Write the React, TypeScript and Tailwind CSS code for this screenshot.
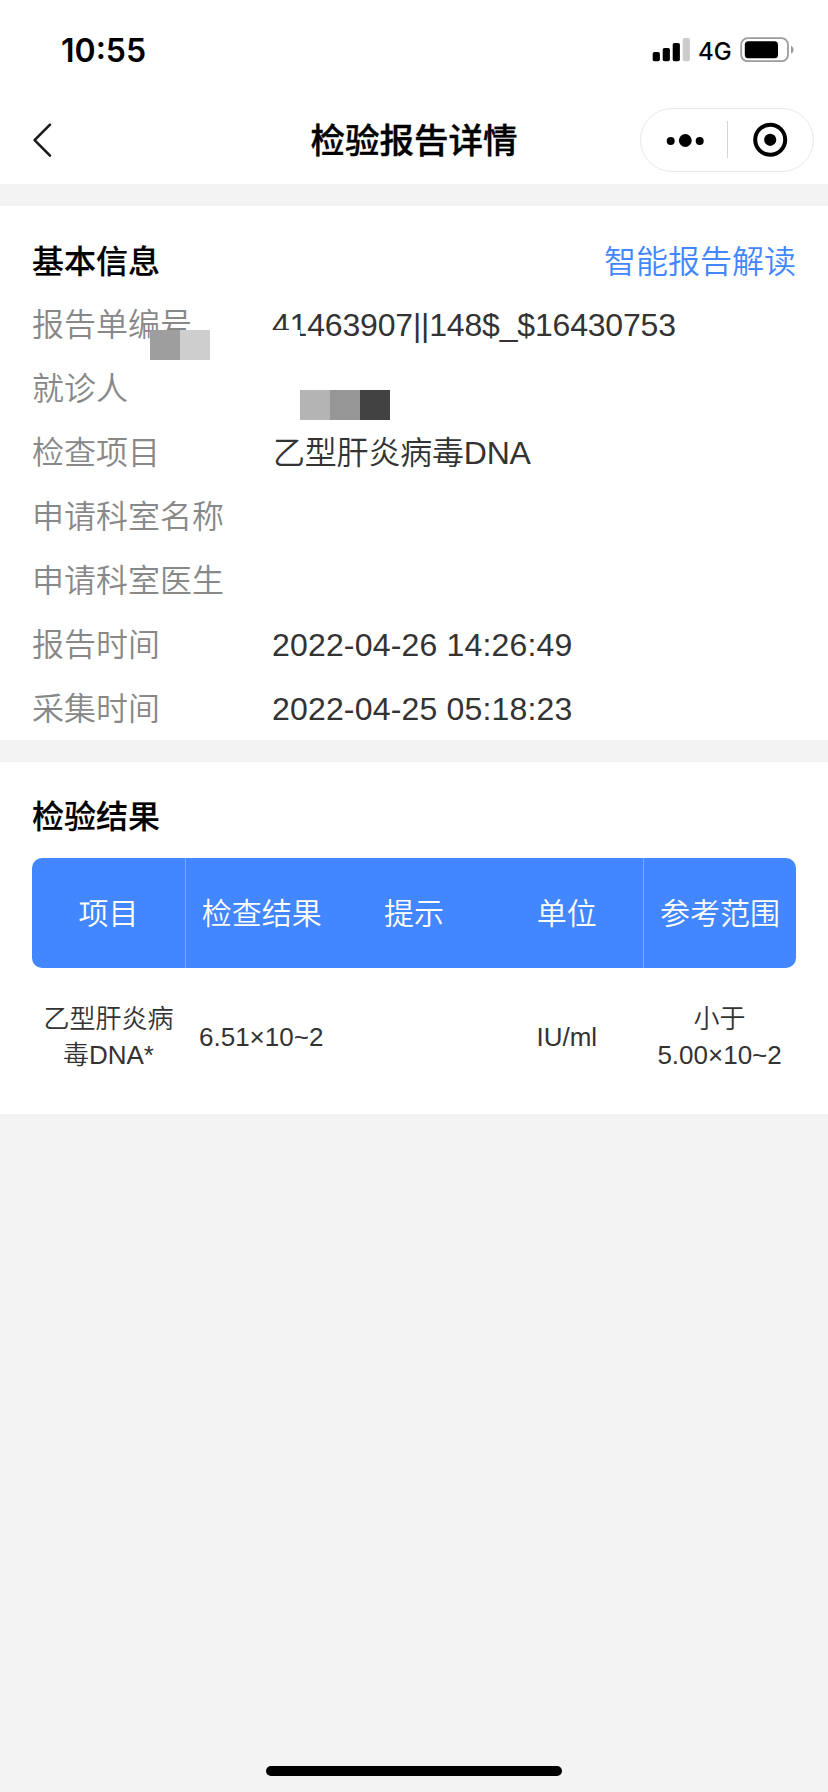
import React from 'react';

const infoRows = [
  { label: '报告单编号', value: '41463907||148$_$16430753', spacing: 'tracking-[-0.18px]' },
  { label: '就诊人', value: '', spacing: '' },
  { label: '检查项目', value: '乙型肝炎病毒DNA', spacing: 'pl-px tracking-[-0.2px]' },
  { label: '申请科室名称', value: '', spacing: '' },
  { label: '申请科室医生', value: '', spacing: '' },
  { label: '报告时间', value: '2022-04-26 14:26:49', spacing: 'tracking-[0.17px]' },
  { label: '采集时间', value: '2022-04-25 05:18:23', spacing: 'tracking-[0.17px]' },
];

const columns = ['项目', '检查结果', '提示', '单位', '参考范围'];

const results = [['乙型肝炎病毒DNA*', '6.51×10~2', '', 'IU/ml', '小于 5.00×10~2']];

const StatusBar: React.FC = () => (
  <div className="flex h-24 items-start justify-between pl-[61px] pr-[33px] font-['Inter',sans-serif] text-black">
    <span className="pt-[31px] text-[32px] leading-10 font-semibold">10:55</span>
    <div className="flex pt-[30px]">
      <svg width="38" height="40" viewBox="0 0 38 40">
        <rect x="0.7" y="22" width="7.2" height="9.3" rx="1.8" />
        <rect x="10.7" y="18" width="7.2" height="13.3" rx="1.8" />
        <rect x="20.7" y="13" width="7.2" height="18.3" rx="1.8" />
        <rect x="30.7" y="8" width="7.2" height="23.3" rx="1.8" fill="#cccccc" />
      </svg>
      <span className="ml-2 w-[34px] text-[24px] leading-[43px] font-medium">4G</span>
      <svg className="ml-[8px]" width="55" height="40" viewBox="0 0 55 40">
        <rect x="1.2" y="8.2" width="46.8" height="23" rx="6.5" fill="none" stroke="#9b9b9b" strokeWidth="1.8" />
        <rect x="4.8" y="11.2" width="33.2" height="17" rx="3.5" />
        <path d="M51 15.8c3.4 1.6 3.4 6.4 0 8z" fill="#9b9b9b" />
      </svg>
    </div>
  </div>
);

const NavBar: React.FC = () => (
  <div className="flex h-[88px] items-start justify-between pl-[30px] pr-[14px] pt-3">
    <button type="button" className="flex h-16 w-[158px] items-center">
      <svg width="28" height="40" viewBox="0 0 28 40" fill="none" stroke="#1a1a1a" strokeWidth="2.6" strokeLinecap="round" strokeLinejoin="round">
        <path d="M20 4.7 4.6 20.2 20 35.7" />
      </svg>
    </button>
    <h1 className="pt-px text-[34.5px] leading-16 font-medium text-black [-webkit-text-stroke:0.4px_black]">检验报告详情</h1>
    <div className="flex h-16 w-[174px] items-center rounded-full border border-[#e8e8e8]">
      <svg width="172" height="62" viewBox="0 0 172 62">
        <circle cx="29.7" cy="32" r="4" />
        <circle cx="44.3" cy="31.5" r="6.4" />
        <circle cx="58.7" cy="32" r="4" />
        <path d="M86.5 12v37" stroke="#d4d4d4" />
        <circle cx="129.2" cy="30.8" r="15" fill="none" stroke="#000" strokeWidth="4" />
        <circle cx="129.2" cy="30.8" r="6.1" />
      </svg>
    </div>
  </div>
);

const InfoSection: React.FC = () => (
  <section className="relative h-[534px] bg-white px-8 pt-[23px]">
    <div className="flex h-16 items-center justify-between pt-px text-[32px] leading-16">
      <h2 className="font-medium text-black [-webkit-text-stroke:0.2px_black]">基本信息</h2>
      <a className="font-[350] text-[#4287ff]">智能报告解读</a>
    </div>
    {infoRows.map((row) => (
      <div key={row.label} className="flex h-16 text-[32px] leading-16 font-[350]">
        <span className="w-60 text-[#888888]">{row.label}</span>
        <span className={`text-[#333333] ${row.spacing}`}>{row.value}</span>
      </div>
    ))}

    {/* blocks hiding the private fields */}
    <div className="absolute left-[150px] top-[124px] flex">
      <div className="size-[30px] bg-[#9e9e9e]" />
      <div className="size-[30px] bg-[#cecece]" />
      <div className="h-[30px] w-[90px] bg-white" />
    </div>
    <div className="absolute left-[300px] top-[184px] flex">
      <div className="size-[30px] bg-[#b4b4b4]" />
      <div className="size-[30px] bg-[#969696]" />
      <div className="size-[30px] bg-[#424242]" />
    </div>
  </section>
);

const ResultSection: React.FC = () => (
  <section className="mt-[22px] h-[352px] bg-white px-8 pt-[23px]">
    <h2 className="text-[32px] leading-16 font-medium text-black [-webkit-text-stroke:0.2px_black]">检验结果</h2>
    <div className="mt-[9px] grid h-[110px] grid-cols-5 overflow-hidden rounded-[10px] bg-[#4287ff] text-center text-[30px] leading-[112px] font-[350] text-white">
      {columns.map((column, index) => (
        <div key={column} className={index === 1 || index === 4 ? 'border-l border-[#7aaaff]' : ''}>
          {column}
        </div>
      ))}
    </div>
    {results.map((cells) => (
      <div key={cells[0]} className="grid h-[138px] grid-cols-5 items-center text-center text-[26px] leading-9 font-[350] text-[#333333]">
        {cells.map((cell, index) => (
          <div key={index} className="px-[10px]">{cell}</div>
        ))}
      </div>
    ))}
  </section>
);

export default function App() {
  return (
    <div className="relative h-[1792px] w-[828px] overflow-hidden bg-[#f3f3f3] font-['Liberation_Sans','Noto_Sans_CJK_SC',sans-serif]">
      <header className="mb-[22px] bg-white">
        <StatusBar />
        <NavBar />
      </header>
      <InfoSection />
      <ResultSection />
      <div className="absolute bottom-4 left-[266px] h-[10.5px] w-[296px] rounded-full bg-black" />
    </div>
  );
}
